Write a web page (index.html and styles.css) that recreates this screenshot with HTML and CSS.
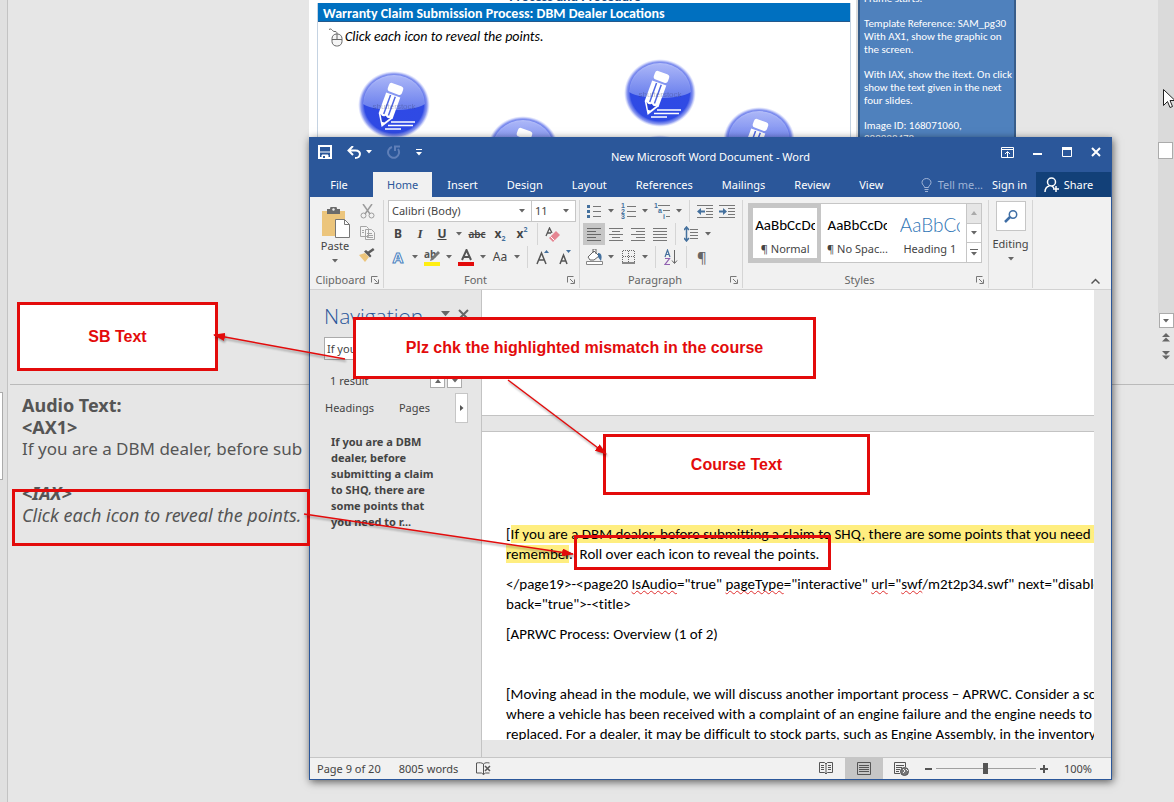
FILE: index.html
```html
<!DOCTYPE html>
<html lang="en">
<head>
<meta charset="utf-8">
<title>New Microsoft Word Document - Word</title>
<link rel="stylesheet" href="styles.css">
</head>
<body>
<svg class="defs" aria-hidden="true">
  <defs>
    <symbol id="caret" viewBox="0 0 6 4"><path d="M0 0h6L3 3.500z" fill="currentColor"/></symbol>
    <symbol id="launcher" viewBox="0 0 8 8"><path d="M.5 6.500V.5h6M3 3l3.500 3.500M7.500 3.500v4h-4" fill="none" stroke="#777"/></symbol>
    <radialGradient id="orb" cx=".5" cy=".5" r=".5"><stop offset="0" stop-color="#2f49e6"/><stop offset=".82" stop-color="#2f4ae4"/><stop offset=".92" stop-color="#6073ea" stop-opacity=".7"/><stop offset="1" stop-color="#aab4f8" stop-opacity="0"/></radialGradient>
    <linearGradient id="gloss" x1="0" y1="0" x2="0" y2="1"><stop offset="0" stop-color="#c3cbfb"/><stop offset="1" stop-color="#7085ee"/></linearGradient>
    <symbol id="pencil" viewBox="-36 -36 72 72">
      <ellipse rx="36" ry="34" fill="url(#orb)"/>
      <path d="M-31-1A31 29 0 0 1 31-1C18 7-18 7-31-1z" fill="url(#gloss)" opacity=".85"/>
      <g transform="translate(-6 3) rotate(20)">
        <rect x="-7" y="-25" width="15" height="9" rx="3" fill="#fff"/>
        <path d="M-7-14H8V8L.5 20-7 8z" fill="#fff"/>
        <path d="M-2-13V7M3-13V7" stroke="#5068e4" stroke-width="1.500"/>
        <path d="M-5 8Q-2 11 .5 8 4 11 6 8L1.500 15H-1z" fill="#2740d8"/>
      </g>
      <path d="M-3 17H21M-6 20.500H19M-9 24H7" stroke="#fff" stroke-width="1.500"/>
      <text class="watermark" x="0" y="4" text-anchor="middle">shutterstock</text>
    </symbol>
  </defs>
</svg>

<div class="deck">
  <div class="thumbs"><span class="thumbs-grip"></span></div>
  <main class="editor">
    <section class="stage">
      <article class="slide">
        <div class="slide-top"><p>Process and Procedure</p></div>
        <div class="slide-frame">
          <h1>Warranty Claim Submission Process: DBM Dealer Locations</h1>
          <p class="prompt">
            <svg width="16" height="19" viewBox="0 0 16 19" fill="none" stroke="#666"><path d="M1 1.500C4-.5 4 4 7 3.500 9 3.500 9 5 9 6"/><rect x="4" y="6" width="10" height="12" rx="4.500" fill="#f5f5f5"/><path d="M4 11.500h10M9 6v5.500"/></svg>
            Click each icon to reveal the points.
          </p>
          <svg class="orbs" width="532" height="122" viewBox="318 50 532 122">
            <use href="#pencil" x="358" y="69" width="72" height="72"/>
            <use href="#pencil" x="624" y="57" width="72" height="72"/>
            <use href="#pencil" x="487" y="114" width="72" height="72"/>
            <use href="#pencil" x="723" y="105" width="72" height="72"/>
            <use href="#pencil" x="624" y="133" width="72" height="72"/>
          </svg>
        </div>
      </article>
      <aside class="comment">
        <p>Frame starts.</p>
        <p>Template Reference: SAM_pg30<br>With AX1, show the graphic on<br>the screen.</p>
        <p>With IAX, show the itext. On click<br>show the text given in the next<br>four slides.</p>
        <p>Image ID: 168071060,<br>280238478</p>
      </aside>
    </section>
    <section class="notes">
      <p><b>Audio Text:</b></p>
      <p><b>&lt;AX1&gt;</b></p>
      <p>If you are a DBM dealer, before sub</p>
      <p>&nbsp;</p>
      <p><b><i>&lt;IAX&gt;</i></b></p>
      <p><i>Click each icon to reveal the points.</i></p>
    </section>
  </main>
  <div class="rail">
    <div class="track"><button class="thumb" aria-label="Scroll"></button></div>
    <button class="rail-down" aria-label="Scroll down"><svg width="8" height="4"><use href="#caret"/></svg></button>
    <button class="rail-jump" aria-label="Previous slide"><svg width="8" height="9" viewBox="0 0 8 9" fill="#666"><path d="M0 4h8L4 0zM0 8.500h8l-4-4z"/></svg></button>
    <button class="rail-jump" aria-label="Next slide"><svg width="8" height="9" viewBox="0 0 8 9" fill="#666"><path d="M0 0h8L4 4zM0 4.500h8l-4 4z"/></svg></button>
  </div>
</div>

<div class="word">
  <header class="titlebar">
    <div class="quick">
      <button aria-label="Save"><svg width="14" height="14" viewBox="0 0 14 14"><path d="M1 1h12v12H1z" fill="none" stroke="#fff" stroke-width="2"/><path d="M1 7h12M4 10h6v4H4z" fill="#fff" stroke="#fff"/><path d="M5 11h2v2H5z" fill="#2b579a"/></svg></button>
      <button class="undo" aria-label="Undo"><svg width="14" height="13" viewBox="0 0 14 13" fill="none" stroke="#fff" stroke-width="2"><path d="M6 0L1.500 4.500 6 9M2 4.500h6.500C15 4.500 14 12 8 12"/></svg><svg width="6" height="4"><use href="#caret"/></svg></button>
      <button class="redo" aria-label="Redo"><svg width="14" height="14" viewBox="0 0 14 14" fill="none" stroke="#5f7fb8" stroke-width="2"><path d="M5 2A5.500 5.500 0 1 0 11 4M8 6V1.500h5"/></svg></button>
      <button aria-label="Customize toolbar"><svg width="6" height="7" viewBox="0 0 6 7" fill="#fff"><path d="M0 0h6v1H0zM0 3h6L3 6.500z"/></svg></button>
    </div>
    <div class="title">New Microsoft Word Document - Word</div>
    <div class="controls">
      <button aria-label="Ribbon display"><svg width="13" height="11" viewBox="0 0 13 11" fill="none" stroke="#fff"><path d="M.5.5h12v10H.5zM.5 2.500h12M6.500 10V5M4 7l2.500-2.500L9 7"/></svg></button>
      <button aria-label="Minimize"><svg width="10" height="10"><path d="M0 6h9v2H0z" fill="#fff"/></svg></button>
      <button aria-label="Maximize"><svg width="10" height="10"><path d="M.5 1v8.500h9V1" fill="none" stroke="#fff"/><path d="M0 0h10v3H0z" fill="#fff"/></svg></button>
      <button aria-label="Close"><svg width="10" height="10"><path d="M1 1l8 8M9 1L1 9" stroke="#fff" stroke-width="2"/></svg></button>
    </div>
  </header>

  <nav class="tabs">
    <button class="file">File</button>
    <button class="on">Home</button>
    <button>Insert</button>
    <button>Design</button>
    <button>Layout</button>
    <button>References</button>
    <button>Mailings</button>
    <button>Review</button>
    <button>View</button>
    <button class="tell"><svg width="11" height="14" viewBox="0 0 11 14" fill="none" stroke="#9fb3d6"><path d="M3.500 9.500C3.500 7.500 1 7 1 4.500a4.500 4 0 0 1 9 0C10 7 7.500 7.500 7.500 9.500zM3.500 11.500h4M4 13.500h3"/></svg>Tell me...</button>
    <button class="sign">Sign in</button>
    <button class="share"><svg width="16" height="16" viewBox="0 0 16 16" fill="none" stroke="#fff" stroke-width="1.500"><circle cx="7.500" cy="5" r="4"/><path d="M1 15c0-4 2-5.500 4.500-6M8 9l2 2M12 9v6M9 12h6"/></svg>Share</button>
  </nav>

  <div class="ribbon">
    <section class="group clipboard">
      <div class="tools">
        <button class="paste"><svg width="29" height="31" viewBox="0 0 29 31"><path d="M1 4h23v25H1z" fill="#ecc57c"/><path d="M6 2h3a3.500 3 0 0 1 7 0h3v5H6z" fill="#6b6b6b"/><circle cx="12.500" cy="2.500" r="1.200" fill="#f0f0f0"/><path d="M14.500 12.500h9l5 5v13h-14z" fill="#fff" stroke="#777"/><path d="M23.500 12.500v5h5" fill="none" stroke="#777"/></svg>Paste<svg class="caret" width="6" height="4"><use href="#caret"/></svg></button>
        <div class="edits">
          <button class="b" aria-label="Cut"><svg width="15" height="15" viewBox="0 0 15 15" fill="none" stroke="#9c9c9c"><path d="M3 0l7 10M12 0L5 10" stroke-width="1.500"/><circle cx="3.500" cy="11.500" r="2.500"/><circle cx="11.500" cy="11.500" r="2.500"/></svg></button>
          <button class="b" aria-label="Copy"><svg width="15" height="14" viewBox="0 0 15 14" fill="#f4f4f4" stroke="#a5a5a5"><path d="M.5.5h6l2 2v8h-8zM5.500 3.500h6l3 3v7h-9z"/><path d="M7 7.500h5M7 9.500h6M7 11.500h6M2 4.500h2M2 6.500h2"/></svg></button>
          <button class="b" aria-label="Format Painter"><svg width="16" height="14" viewBox="0 0 16 14"><path d="M0 7l6-2 4 4-4 5z" fill="#ecc57c"/><path d="M5 3.500l6 6 1.500-1.500-2-2.500L15.500 2 14 0 9 3.500 7 2z" fill="#5c5c5c"/></svg></button>
        </div>
      </div>
      <footer><span>Clipboard</span><button aria-label="Clipboard options"><svg width="8" height="8"><use href="#launcher"/></svg></button></footer>
    </section>

    <section class="group font">
      <div class="rows">
        <div class="row combos">
          <label class="combo family"><select aria-label="Font"><option>Calibri (Body)</option></select><svg width="6" height="4"><use href="#caret"/></svg></label>
          <label class="combo size"><select aria-label="Font size"><option>11</option></select><svg width="6" height="4"><use href="#caret"/></svg></label>
        </div>
        <div class="row">
          <button class="b bold">B</button><button class="b ital">I</button><button class="b under">U</button><button class="c" aria-label="Underline styles"><svg width="6" height="4"><use href="#caret"/></svg></button><button class="b strike">abc</button><button class="b bold" aria-label="Subscript">x<sub>2</sub></button><button class="b bold" aria-label="Superscript">x<sup>2</sup></button><i class="sep"></i>
          <button class="b" aria-label="Clear formatting"><svg width="16" height="15" viewBox="0 0 16 15"><path d="M1 9L4.500 1 7 6M2.500 6H6" fill="none" stroke="#555" stroke-width="1.300"/><path d="M11 4l4 4-7 7-4-4z" fill="#e58592"/><path d="M5.500 9.500l4 4" stroke="#fff"/></svg></button>
        </div>
        <div class="row">
          <button class="b effect">A</button><button class="c" aria-label="Text effects"><svg width="6" height="4"><use href="#caret"/></svg></button>
          <button class="b" aria-label="Highlight"><svg width="17" height="17" viewBox="0 0 17 17"><text class="mark" x="0" y="9">ab</text><path d="M14 2l2 2-7 7-3 1 1-3z" fill="#777"/><path d="M0 13h16v4H0z" fill="#ffee12"/></svg></button><button class="c" aria-label="Highlight colors"><svg width="6" height="4"><use href="#caret"/></svg></button>
          <button class="b" aria-label="Font color"><svg width="17" height="17" viewBox="0 0 17 17"><path d="M4 11L8.500 1 13 11M5.500 8h6" fill="none" stroke="#555" stroke-width="2"/><path d="M0 13h16v4H0z" fill="#e30b0b"/></svg></button><button class="c" aria-label="Font colors"><svg width="6" height="4"><use href="#caret"/></svg></button>
          <button class="b case">Aa</button><button class="c" aria-label="Change case"><svg width="6" height="4"><use href="#caret"/></svg></button><i class="sep"></i>
          <button class="b" aria-label="Grow font"><svg width="15" height="15" viewBox="0 0 15 15"><path d="M1 14L5.500 3 10 14M2.500 10h6" fill="none" stroke="#555" stroke-width="1.500"/><path d="M8 3h5l-2.500-3z" fill="#44709d"/></svg></button>
          <button class="b" aria-label="Shrink font"><svg width="15" height="15" viewBox="0 0 15 15"><path d="M2 14L5.500 5 9 14M3 11h5" fill="none" stroke="#555" stroke-width="1.500"/><path d="M8 0h5l-2.500 3z" fill="#44709d"/></svg></button>
        </div>
      </div>
      <footer><span>Font</span><button aria-label="Font options"><svg width="8" height="8"><use href="#launcher"/></svg></button></footer>
    </section>

    <section class="group para">
      <div class="rows">
        <div class="row">
          <button class="b" aria-label="Bullets"><svg width="15" height="14" viewBox="0 0 15 14"><path d="M6 2.500h8M6 7.500h8M6 12.500h8" stroke="#777"/><path d="M0 1h3v3H0zM0 6h3v3H0zM0 11h3v3H0z" fill="#44709d"/></svg></button><button class="c" aria-label="Bullet styles"><svg width="6" height="4"><use href="#caret"/></svg></button>
          <button class="b" aria-label="Numbering"><svg width="15" height="16" viewBox="0 0 15 16"><path d="M6 3.500h9M6 8.500h9M6 13.500h9" stroke="#777"/><text class="num" x="0" y="5">1</text><text class="num" x="0" y="11">2</text><text class="num" x="0" y="16">3</text></svg></button><button class="c" aria-label="Number styles"><svg width="6" height="4"><use href="#caret"/></svg></button>
          <button class="b" aria-label="Multilevel list"><svg width="16" height="16" viewBox="0 0 16 16"><path d="M4 2.500h12M9 7.500h7M12 13.500h4" stroke="#777"/><text class="num" x="0" y="5">1</text><text class="num" x="4" y="10">a</text><text class="num" x="9" y="16">i</text></svg></button><button class="c" aria-label="List levels"><svg width="6" height="4"><use href="#caret"/></svg></button><i class="sep"></i>
          <button class="b" aria-label="Decrease indent"><svg width="16" height="13" viewBox="0 0 16 13"><path d="M0 .5h16M9 3.500h7M9 6.500h7M9 9.500h7M0 12.500h16" stroke="#777"/><path d="M0 6.500L4 3v2.500h4v2H4V10z" fill="#44709d"/></svg></button>
          <button class="b" aria-label="Increase indent"><svg width="16" height="13" viewBox="0 0 16 13"><path d="M0 .5h16M9 3.500h7M9 6.500h7M9 9.500h7M0 12.500h16" stroke="#777"/><path d="M8 6.500L4 3v2.500H0v2h4V10z" fill="#44709d"/></svg></button>
        </div>
        <div class="row">
          <button class="b on" aria-label="Align left"><svg width="14" height="13" viewBox="0 0 14 13" stroke="#666"><path d="M0 .5h14M0 3.500h9M0 6.500h14M0 9.500h9M0 12.500h14"/></svg></button><button class="b" aria-label="Center"><svg width="14" height="13" viewBox="0 0 14 13" stroke="#777"><path d="M0 .5h14M3 3.500h8M0 6.500h14M3 9.500h8M0 12.500h14"/></svg></button><button class="b" aria-label="Align right"><svg width="14" height="13" viewBox="0 0 14 13" stroke="#777"><path d="M0 .5h14M5 3.500h9M0 6.500h14M5 9.500h9M0 12.500h14"/></svg></button><button class="b" aria-label="Justify"><svg width="14" height="13" viewBox="0 0 14 13" stroke="#777"><path d="M0 .5h14M0 3.500h14M0 6.500h14M0 9.500h14M0 12.500h14"/></svg></button><i class="sep"></i>
          <button class="b" aria-label="Line spacing"><svg width="15" height="16" viewBox="0 0 15 16"><path d="M6 3.500h8M6 6.500h8M6 9.500h8M6 12.500h8" stroke="#777"/><path d="M2.500 1v14M0 4l2.500-3L5 4M0 12l2.500 3L5 12" fill="none" stroke="#44709d" stroke-width="1.500"/></svg></button><button class="c" aria-label="Line spacing options"><svg width="6" height="4"><use href="#caret"/></svg></button>
        </div>
        <div class="row">
          <button class="b" aria-label="Shading"><svg width="17" height="16" viewBox="0 0 17 16"><path d="M2 8l6-6 5 5-5 4H4zM7 4V0h3v5" fill="#fff" stroke="#666"/><path d="M12 4c4 0 4 4 3 8l-3-4z" fill="#44709d"/><path d="M.5 12.500h16v3H.5z" fill="#fff" stroke="#888"/></svg></button><button class="c" aria-label="Shading colors"><svg width="6" height="4"><use href="#caret"/></svg></button>
          <button class="b" aria-label="Borders"><svg width="13" height="14" viewBox="0 0 13 14" fill="none" stroke="#666"><path d="M.5 12V.5h12V12M6.500 1v11M1 6.500h11" stroke-dasharray="1 1"/><path d="M0 13h13" stroke-width="1.500"/></svg></button><button class="c" aria-label="Border styles"><svg width="6" height="4"><use href="#caret"/></svg></button><i class="sep"></i>
          <button class="b" aria-label="Sort"><svg width="14" height="17" viewBox="0 0 14 17"><path d="M1 8l2.500-7L6 8M2 5.500h3" fill="none" stroke="#44709d" stroke-width="1.200"/><path d="M1 9.500h4.500L1 15.500h5" fill="none" stroke="#9060b0" stroke-width="1.200"/><path d="M10.500 1v13M8 11.500l2.500 3 2.500-3" fill="none" stroke="#666"/></svg></button><i class="sep"></i>
          <button class="b pilcrow" aria-label="Show marks">¶</button>
        </div>
      </div>
      <footer><span>Paragraph</span><button aria-label="Paragraph options"><svg width="8" height="8"><use href="#launcher"/></svg></button></footer>
    </section>

    <section class="group styles">
      <div class="gallery">
        <button class="style on"><span class="sample">AaBbCcDc</span><span>¶ Normal</span></button>
        <button class="style"><span class="sample">AaBbCcDc</span><span>¶ No Spac...</span></button>
        <button class="style"><span class="sample heading">AaBbCc</span><span>Heading 1</span></button>
        <div class="spin">
          <button class="off" aria-label="Previous styles"><svg width="6" height="4" viewBox="0 0 6 4"><path d="M0 4h6L3 0z" fill="#aaa"/></svg></button>
          <button aria-label="Next styles"><svg width="6" height="4"><use href="#caret"/></svg></button>
          <button aria-label="More styles"><svg width="8" height="7" viewBox="0 0 8 7" fill="#666"><path d="M0 0h8v1H0zM1 3h6L4 6.500z"/></svg></button>
        </div>
      </div>
      <footer><span>Styles</span><button aria-label="Styles options"><svg width="8" height="8"><use href="#launcher"/></svg></button></footer>
    </section>

    <section class="group editing">
      <button><span class="find"><svg width="14" height="13" viewBox="0 0 14 13" fill="none" stroke="#3f6ea5" stroke-width="1.500"><circle cx="9" cy="4.500" r="3.700"/><path d="M6 7L1 12" stroke-width="2.500"/></svg></span>Editing<svg class="caret" width="6" height="4"><use href="#caret"/></svg></button>
    </section>
    <button class="collapse" aria-label="Collapse ribbon"><svg width="9" height="6" viewBox="0 0 9 6" fill="none" stroke="#555" stroke-width="1.500"><path d="M.5 5.500l4-4 4 4"/></svg></button>
  </div>

  <div class="work">
    <aside class="navpane">
      <div class="nav-head"><h2>Navigation</h2><button aria-label="Pane options"><svg width="9" height="6"><use href="#caret"/></svg></button><button aria-label="Close pane"><svg width="11" height="11" viewBox="0 0 11 11" stroke="#666" stroke-width="2"><path d="M1 1l9 9M10 1l-9 9"/></svg></button></div>
      <input class="search" type="text" aria-label="Search document" value="If you are a DBM">
      <div class="found"><span>1 result</span><button aria-label="Previous result"><svg width="6" height="4" viewBox="0 0 6 4"><path d="M0 4h6L3 0z" fill="#666"/></svg></button><button aria-label="Next result"><svg width="6" height="4"><use href="#caret"/></svg></button></div>
      <div class="views"><button>Headings</button><button>Pages</button><button class="more" aria-label="More views"><svg width="4" height="6" viewBox="0 0 4 6"><path d="M0 0v6l3.500-3z" fill="#555"/></svg></button></div>
      <p class="hit">If you are a DBM<br>dealer, before<br>submitting a claim<br>to SHQ, there are<br>some points that<br>you need to r...</p>
    </aside>
    <div class="pages">
      <div class="page prev"></div>
      <div class="page current">
        <p>[<mark>If you are a DBM dealer, before submitting a claim to SHQ, there are some points that you need to</mark><br><mark>remember</mark>.&nbsp; Roll over each icon to reveal the points.</p>
        <p>&lt;/page19&gt;-&lt;page20 <u>IsAudio</u>="true" <u>pageType</u>="interactive" <u>url</u>="<u>swf</u>/m2t2p34.swf" next="disable"<br>back="true"&gt;-&lt;title&gt;</p>
        <p>[APRWC Process: Overview (1 of 2)</p>
        <p>&nbsp;</p>
        <p>[Moving ahead in the module, we will discuss another important process – APRWC. Consider a scenario<br>where a vehicle has been received with a complaint of an engine failure and the engine needs to be<br>replaced. For a dealer, it may be difficult to stock parts, such as Engine Assembly, in the inventory and</p>
      </div>
    </div>
  </div>

  <footer class="status">
    <span>Page 9 of 20</span>
    <span>8005 words</span>
    <button aria-label="Proofing errors"><svg width="15" height="13" viewBox="0 0 15 13" fill="none" stroke="#555"><path d="M7.500 2v10.500M7.500 2C6 .5 3 .5.5 1v10h5l2 1.500 2-1.500h4M7.500 2C9 .5 11 .5 13.500 1"/><path d="M9 4l5 5M14 4L9 9" stroke-width="1.500"/></svg></button>
    <div class="viewmodes">
      <button aria-label="Read mode"><svg width="14" height="13" viewBox="0 0 14 13" fill="none" stroke="#555"><path d="M.5.500h5L7 2l1.500-1.500h5v10H8.500L7 12 5.500 10.500h-5zM7 2v10M2 3.500h3M2 5.500h3M2 7.500h3M9 3.500h3M9 5.500h3M9 7.500h3"/></svg></button>
      <button class="on" aria-label="Print layout"><svg width="14" height="13" viewBox="0 0 14 13" fill="none" stroke="#555"><path d="M.5.5h13v12H.5zM2 3.500h10M2 5.500h10M2 7.500h10M2 9.500h10"/></svg></button>
      <button aria-label="Web layout"><svg width="15" height="14" viewBox="0 0 15 14" fill="none" stroke="#555"><path d="M6 11.500H.5V.5h11V5M2 3.500h8M2 5.500h6M2 7.500h4M2 9.500h3"/><circle cx="10.500" cy="9.500" r="4" fill="#777"/><path d="M9 7l2 2-2 2M12 7l2 2" stroke="#f1f1f1"/></svg></button>
    </div>
    <button class="zoom-step" aria-label="Zoom out"><svg width="7" height="8"><path d="M0 3h7v2H0z" fill="#555"/></svg></button>
    <input class="zoom" type="range" aria-label="Zoom" min="0" max="100" value="50">
    <button class="zoom-step" aria-label="Zoom in"><svg width="8" height="8"><path d="M0 3h8v2H0zM3 0h2v8H3z" fill="#555"/></svg></button>
    <span class="pct">100%</span>
  </footer>
</div>

<div class="callout sb">SB Text</div>
<div class="callout plz">Plz chk the highlighted mismatch in the course</div>
<div class="callout course">Course Text</div>
<div class="callout open roll"></div>
<div class="callout open click"></div>
<svg class="arrows" width="640" height="580" viewBox="0 0 640 580" aria-hidden="true">
  <defs><marker id="tip" viewBox="0 0 12 8" refX="11" refY="4" markerWidth="12" markerHeight="8" markerUnits="userSpaceOnUse" orient="auto"><path d="M0 0l12 4-12 4z" fill="#e30b0b"/></marker></defs>
  <g stroke="#e30b0b" stroke-width="1.500">
    <path d="M345 359L214 335" marker-end="url(#tip)"/>
    <path d="M508 380L606 454" marker-end="url(#tip)"/>
    <path d="M304 514L573 554" marker-end="url(#tip)"/>
  </g>
</svg>
<svg class="cursor" width="12" height="20" viewBox="0 0 12 20" aria-hidden="true"><path d="M.5.500v16l4-4 2.500 6 2.500-1-2.500-6h5z" fill="#fff" stroke="#222"/></svg>
</body>
</html>
```

FILE: styles.css
```css
* { box-sizing: border-box; }
body {
  margin: 0;
  position: relative;
  height: 100vh;
  overflow: hidden;
  background: #e6e6e6;
  color: #444;
  font: 11px/16px "Noto Sans", "Open Sans", sans-serif;
}
h1, h2, p { margin: 0; }
button, input, select { font: inherit; color: inherit; margin: 0; padding: 0; border: 0; background: none; border-radius: 0; }
button { display: flex; align-items: center; justify-content: center; }
svg { flex: none; display: block; color: #666; }
.defs { position: absolute; width: 0; height: 0; }

/* presentation behind the window */
.deck { display: flex; height: 100%; }
.thumbs { flex: none; width: 8px; border-right: 1px solid #c3c3c3; background: #e0e0e0; padding-top: 392px; }
.thumbs-grip { display: block; width: 3px; height: 88px; background: #fff; border: solid #ababab; border-width: 1px 1px 1px 0; }
.editor { flex: 1; min-width: 0; margin-left: 2px; }
.stage { display: flex; height: 385px; padding-left: 299px; border-bottom: 1px solid #bababa; align-items: flex-start; }
.slide { width: 549px; height: 172px; padding: 0 5px 0 8px; background: #fff; border-right: 2px solid #dcdcdc; }
.slide-top { height: 3px; display: flex; align-items: flex-end; justify-content: center; padding-right: 18px; overflow: hidden; }
.slide-top p { color: #17487c; font: bold 14px/16px Carlito, Lato, sans-serif; height: 14px; }
.slide-frame { border: 1px solid #c5d3e2; border-top: 0; }
.slide-frame h1 { background: #0070c0; border-bottom: 1px solid #24598c; color: #fff; font: bold 14px/18px Carlito, Lato, sans-serif; height: 19px; padding: 2px 5px 0; }
.prompt { display: flex; align-items: center; gap: 1px; height: 28px; padding: 2px 0 0 10px; color: #000; font: italic 14px/18px Carlito, Lato, sans-serif; }
.watermark { font: 8px "Liberation Sans", sans-serif; fill: #39406f; opacity: .35; }
.comment { width: 158px; height: 160px; padding: 0 4px; background: #4f81bd; border: solid #385d8a; border-width: 0 2px; color: #fff; font: 11px/13px Carlito, Lato, sans-serif; white-space: nowrap; overflow: hidden; }
.comment p { margin-bottom: 12px; }
.comment p:first-child { margin-top: -8px; }
.notes { padding: 9px 12px; color: #555; font-size: 17px; line-height: 22px; white-space: nowrap; }
.notes p { height: 22px; }
.notes b, .notes i { font-size: 18px; }

.rail { width: 16px; height: 385px; display: flex; flex-direction: column; align-items: center; border-bottom: 1px solid #bababa; }
.track { width: 100%; height: 313px; padding-top: 142px; background: #dadada; }
.thumb { width: 15px; height: 17px; background: #fff; border: 1px solid #ababab; }
.rail-down { width: 15px; height: 15px; background: #fff; border: 1px solid #ababab; }
.rail-jump { width: 15px; height: 18px; }
.cursor { position: absolute; left: 1163px; top: 89px; }

/* Word window */
.word {
  position: absolute;
  left: 309px;
  top: 137px;
  width: 803px;
  height: 643px;
  display: flex;
  flex-direction: column;
  background: #e6e6e6;
  border: 1px solid #2b579a;
  box-shadow: 1px 2px 8px rgba(0, 0, 0, .6);
}
.titlebar { display: flex; height: 34px; background: #2b579a; color: #fff; }
.titlebar svg { color: #fff; }
.quick, .controls { flex: 0 0 125px; display: flex; align-items: center; gap: 15px; height: 28px; padding-left: 8px; }
.undo { gap: 5px; }
.title { flex: 1; padding-top: 11px; text-align: center; }
.controls { padding: 0 10px 0 0; gap: 19px; justify-content: flex-end; }

.tabs { display: flex; gap: 1px; height: 25px; background: #2b579a; color: #fff; white-space: nowrap; }
.tabs button { padding: 0 14px; }
.tabs .file { width: 58px; margin-right: 4px; }
.tabs .on { background: #f1f1f1; color: #2b579a; }
.tabs .tell { gap: 6px; padding: 0; margin-left: auto; color: #9fb3d6; }
.tabs .sign { padding: 0 8px; }
.tabs .share { width: 75px; padding: 0 10px 0 0; gap: 4px; background: #124078; }

.ribbon { display: flex; height: 93px; background: #f1f1f1; border-bottom: 1px solid #d2d2d2; }
.group { display: flex; flex-direction: column; margin: 3px 0 1px; border-right: 1px solid #d5d5d5; }
.group footer { display: flex; align-items: center; height: 16px; margin-top: auto; padding-right: 4px; color: #666; }
.group footer span { flex: 1; text-align: center; }
.clipboard { width: 74px; }
.font { width: 196px; }
.para { width: 163px; }
.styles { width: 246px; }
.editing { width: 44px; }
.tools { display: flex; }
.paste { flex-direction: column; width: 46px; padding: 4px 0 0 4px; }
.caret { margin-top: 5px; }
.rows { display: flex; flex-direction: column; gap: 1px; padding-left: 3px; }
.row { display: flex; height: 22px; align-items: center; }
.b { width: 22px; height: 22px; }
.c { width: 12px; height: 22px; }
.sep { width: 1px; height: 22px; margin: 0 4px; background: #d5d5d5; }
.b.on { background: #c6c6c6; }
.bold { font-weight: bold; font-size: 12px; }
.bold sub, .bold sup { font-size: 7px; line-height: 7px; color: #44709d; }
.bold sub { align-self: flex-end; margin-bottom: 3px; }
.bold sup { align-self: flex-start; margin-top: 3px; }
.ital { font: italic bold 13px "Liberation Serif", serif; }
.under { font-size: 12px; font-weight: bold; text-decoration: underline; }
.strike { text-decoration: line-through; font-weight: 600; font-size: 10px; width: 24px; }
.effect { color: #fff; font-size: 15px; font-weight: bold; -webkit-text-stroke: 1px #4a83c0; }
.case { font-size: 12px; }
.mark { font: bold 10px "Open Sans", sans-serif; fill: #555; }
.num { font: bold 7px "Liberation Sans", sans-serif; fill: #44709d; }
.pilcrow { font-size: 15px; color: #666; }
.combo { display: grid; grid-template-columns: 1fr 12px; align-items: center; height: 22px; background: #fff; border: 1px solid #c6c6c6; }
.combo select { grid-area: 1 / 1 / 2 / 3; appearance: none; height: 20px; padding-left: 3px; outline: 0; }
.combo svg { grid-area: 1 / 2; pointer-events: none; }
.combos { padding-left: 1px; }
.family { width: 144px; }
.size { width: 44px; border-left: 0; }
.gallery { display: flex; width: 234px; height: 60px; margin: 3px 0 0 5px; background: #fff; border: 1px solid #c6c6c6; }
.style { flex: 1; min-width: 0; flex-direction: column; gap: 7px; border: 4px solid transparent; padding: 6px 2px 0; white-space: nowrap; overflow: hidden; }
.style.on { border-color: #c6c6c6; }
.sample { width: 60px; height: 18px; overflow: hidden; color: #000; font: 15px/18px Carlito, Lato, sans-serif; text-align: left; }
.heading { color: #2e74b5; font: 300 19px/18px Lato, Carlito, sans-serif; }
.spin { width: 15px; display: flex; flex-direction: column; border-left: 1px solid #c6c6c6; }
.spin button { flex: 1; border-bottom: 1px solid #c6c6c6; }
.spin button:last-child { border-bottom: 0; }
.spin .off { background: #e6e6e6; }
.editing button { flex-direction: column; width: 43px; padding-top: 1px; }
.find { display: flex; align-items: center; justify-content: center; width: 30px; height: 30px; margin-bottom: 5px; background: #fff; border: 1px solid #c6c6c6; }
.collapse { align-self: flex-end; margin: 0 11px 5px auto; }

.work { flex: 1; min-height: 0; display: flex; }
.navpane { flex: none; width: 172px; padding: 14px 12px 0 14px; border-right: 1px solid #c3c3c3; }
.nav-head { display: flex; align-items: center; height: 24px; gap: 8px; }
.nav-head h2 { flex: 1; color: #2b579a; font: 300 21px/24px "Open Sans", sans-serif; }
.nav-head button { height: 16px; margin-top: -4px; }
.search { display: block; width: 140px; height: 23px; margin-top: 9px; padding: 0 2px; background: #fff; border: 1px solid #ababab; }
.found { display: flex; align-items: center; gap: 2px; height: 24px; margin-top: 7px; padding: 3px 7px 0 6px; }
.found span { flex: 1; }
.found button { width: 15px; height: 15px; background: #fff; border: 1px solid #ababab; }
.views { display: flex; align-items: center; height: 30px; margin-top: 2px; padding-left: 1px; gap: 25px; }
.more { width: 13px; height: 30px; margin-left: auto; margin-right: 1px; background: #fff; border: 1px solid #c6c6c6; }
.hit { margin: 11px 0 0 7px; font-weight: bold; white-space: nowrap; }
.pages { flex: 1; min-width: 0; display: flex; flex-direction: column; padding: 0 17px 17px 0; }
.page { background: #fff; color: #000; font: 15px/20px Carlito, Lato, sans-serif; font-variant-ligatures: none; white-space: nowrap; overflow: hidden; }
.prev { flex: none; height: 126px; border-bottom: 1px solid #c3c3c3; }
.current { flex: 1; margin-top: 15px; padding: 92px 0 0 24px; border-top: 1px solid #c3c3c3; }
.page p { margin-bottom: 10px; }
.page mark { background: #ffee80; color: inherit; }
.page u { text-decoration: underline wavy #e03030 1px; text-underline-offset: 1px; text-decoration-skip-ink: none; }

.status { display: flex; align-items: center; gap: 18px; height: 22px; padding: 0 19px 0 7px; background: #f1f1f1; border-top: 1px solid #c6c6c6; }
.viewmodes { display: flex; height: 21px; margin-left: auto; }
.viewmodes button { width: 38px; }
.viewmodes .on { background: #c6c6c6; }
.zoom-step { margin: 0 -14px; }
.zoom { appearance: none; width: 100px; height: 16px; background: linear-gradient(#a0a0a0, #a0a0a0) center / 100% 1px no-repeat; }
.zoom::-webkit-slider-thumb { appearance: none; width: 5px; height: 11px; background: #555; }
.pct { margin-left: 12px; }

/* review marks */
.callout {
  position: absolute;
  display: flex;
  align-items: center;
  justify-content: center;
  background: #fff;
  border: 3px solid #e30b0b;
  color: #e30b0b;
  font: bold 16px/20px "Liberation Sans", Arial, sans-serif;
}
.open { background: none; }
.sb { left: 17px; top: 302px; width: 201px; height: 69px; }
.plz { left: 353px; top: 317px; width: 463px; height: 62px; }
.course { left: 603px; top: 434px; width: 267px; height: 61px; }
.roll { left: 574px; top: 535px; width: 257px; height: 35px; }
.click { left: 12px; top: 489px; width: 298px; height: 57px; }
.arrows { position: absolute; left: 0; top: 0; pointer-events: none; filter: drop-shadow(1px 2px 1px rgba(0, 0, 0, .35)); }
```
